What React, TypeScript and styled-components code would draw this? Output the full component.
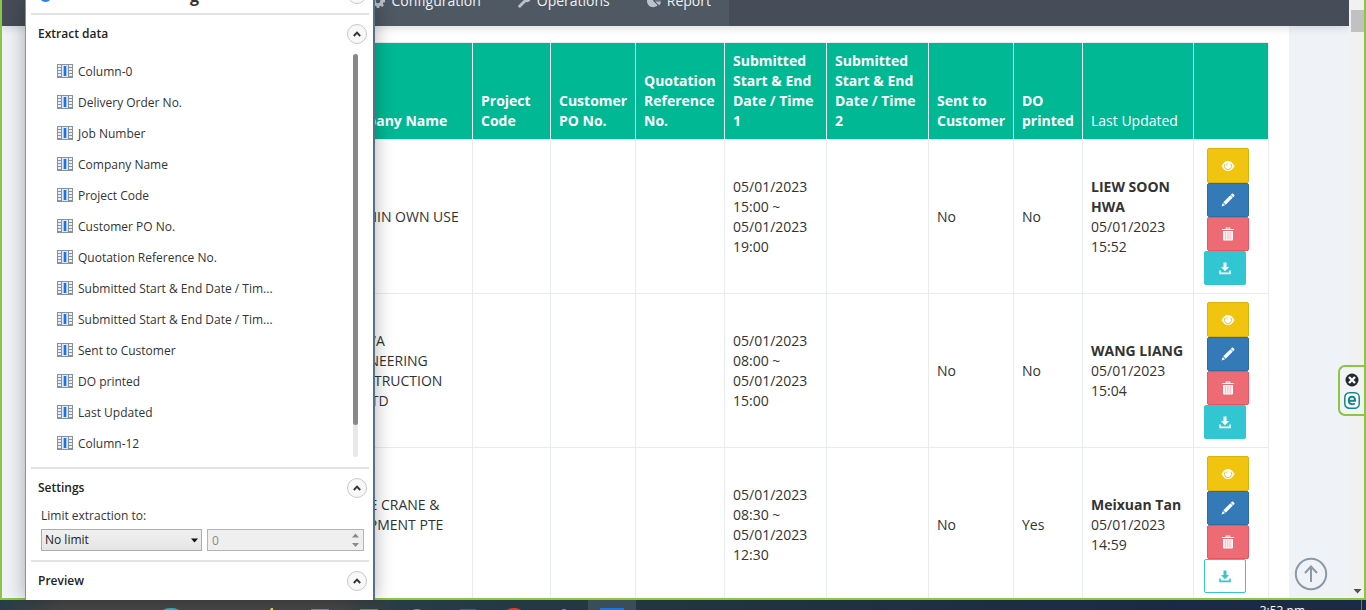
import React from 'react';
import styled, { createGlobalStyle, css } from 'styled-components';

const GlobalStyle = createGlobalStyle`
  * { box-sizing: border-box; }
  body { margin: 0; overflow: hidden; font-family: 'Open Sans', 'Noto Sans', sans-serif; font-size: 14px; line-height: 20px; color: #333; }
  button, input, select { font-family: inherit; }
`;

const Desktop = styled.div`
  position: relative;
  display: flex;
  flex-direction: column;
  height: 100vh;
  overflow: hidden;
`;

const BrowserFrame = styled.div`
  position: relative;
  flex: 1;
  min-height: 0;
  display: flex;
  border: 2px solid #8bc541;
  border-top: 0;
  background: #eff3f8;
`;

const Page = styled.div`
  flex: 1;
  min-width: 0;
  display: flex;
  flex-direction: column;
  overflow: hidden;
`;

const NavBar = styled.header`
  flex: none;
  position: relative;
  display: flex;
  align-items: flex-end;
  height: 26px;
  padding-left: 60px;
  background: #464d58;
  box-shadow: 0 1px 10px 0 rgba(50, 50, 50, 0.2);
`;

const Menu = styled.nav`
  display: flex;
  justify-content: flex-end;
  align-items: flex-end;
  gap: 1px;
  width: 667px;
  height: 26px;
  background: #4e5964;
`;

const MenuLink = styled.a`
  display: flex;
  align-items: center;
  gap: 6px;
  padding: 0 18px 15px;
  color: #f1f1f1;
  text-decoration: none;
  svg { color: #bcc2cb; }
`;

const Card = styled.main`
  flex: 1;
  min-height: 0;
  overflow: hidden;
  margin: 0 60px;
  padding: 16px 20px 0;
  background: #fff;
`;

const Grid = styled.table`
  width: 100%;
  table-layout: fixed;
  border-collapse: collapse;
  th, td { border: 1px solid #e7ecf1; padding: 8px; text-align: left; }
  th { vertical-align: bottom; background: #00b894; color: #fff; font-weight: 700; }
  td { vertical-align: middle; }
`;

const PlainHeading = styled.span`
  font-weight: 500;
`;

const Actions = styled.div`
  display: flex;
  flex-direction: column;
  align-items: flex-start;
  padding-left: 2px;
`;

const tones = {
  view: css`height: 35px; background: #f1c40f; border-color: #dab10d;`,
  edit: css`background: #337ab7; border-color: #2e6da4;`,
  remove: css`background: #ed6b75; border-color: #ea5460;`,
  save: css`margin-left: 0; background: #32c5d2; border-color: #32c5d2;`,
  outline: css`margin-left: 0; background: #fff; border-color: #32c5d2; color: #32c5d2;`,
};

const ActionButton = styled.button<{ $tone: keyof typeof tones }>`
  display: flex;
  align-items: center;
  justify-content: center;
  width: 42px;
  height: 34px;
  margin: 0 0 0 3px;
  padding: 0;
  border: 1px solid;
  border-radius: 2px;
  color: #fff;
  ${(p) => tones[p.$tone]}
`;

const PageScroll = styled.div`
  flex: none;
  display: flex;
  flex-direction: column;
  justify-content: space-between;
  align-items: flex-end;
  width: 15px;
  padding-top: 10px;
  background: #f1f1f1;
`;

const PageThumb = styled.div`
  width: 13px;
  height: 22px;
  background: #c1c1c1;
`;

const ScrollDown = styled.svg`
  margin: 0 2px 4px;
`;

const TopButton = styled.button`
  position: absolute;
  right: 36px;
  bottom: 7px;
  width: 34px;
  height: 34px;
  padding: 0;
  border: 0;
  background: none;
`;

const SideBadge = styled.aside`
  position: absolute;
  right: 0;
  top: 365px;
  display: flex;
  flex-direction: column;
  align-items: center;
  gap: 5px;
  width: 26px;
  height: 51px;
  padding-top: 6px;
  border: 2px solid #8bc541;
  border-right: 0;
  border-radius: 7px 0 0 7px;
  background: #f2f3f5;
`;

const Panel = styled.section`
  position: absolute;
  left: 25px;
  top: 0;
  bottom: 10px;
  width: 350px;
  padding: 0 4px 0 5px;
  overflow: hidden;
  border: solid;
  border-width: 0 2px 0 1px;
  border-color: #8b8f96 #557089 #8b8f96 #8b8f96;
  background: #fff;
  color: #333;
  font-size: 12px;
  line-height: 16px;
`;

const PanelShadow = styled.div`
  position: absolute;
  left: 25px;
  top: 0;
  bottom: 10px;
  width: 350px;
  box-shadow: 0 0 18px rgba(0, 0, 0, 0.3);
`;

const PanelTitle = styled.div`
  display: flex;
  align-items: flex-end;
  justify-content: space-between;
  height: 13px;
  padding: 0 2px 0 8px;
`;

const TitleText = styled.strong`
  flex: 1;
  padding: 0 0 7px 138px;
  font-size: 16px;
  line-height: 20px;
`;

const TitleMark = styled.svg`
  margin-bottom: 11px;
`;

const Group = styled.section`
  border-top: 2px solid #e3e3e3;
`;

const GroupHead = styled.div`
  display: flex;
  align-items: center;
  justify-content: space-between;
  height: 38px;
  padding: 0 2px 0 7px;
`;

const GroupTitle = styled.h2`
  margin: 0;
  color: #222;
  font-size: 12px;
  line-height: 16px;
  font-weight: 600;
`;

const Toggle = styled.button`
  display: flex;
  align-items: center;
  justify-content: center;
  width: 20px;
  height: 20px;
  padding: 0;
  border: 1px solid #c9c9c9;
  border-radius: 50%;
  background: #f8f8f8;
`;

const TitleToggle = styled(Toggle)`
  margin-bottom: 9px;
`;

const ListArea = styled.div`
  display: flex;
  justify-content: space-between;
  height: 414px;
  padding: 1px 11px 10px 26px;
`;

const FieldList = styled.ul`
  margin: 0;
  padding: 2px 0 0;
  list-style: none;
`;

const Field = styled.li`
  display: flex;
  align-items: center;
  gap: 5px;
  height: 31px;
  svg { margin-bottom: 2px; }
`;

const ListTrack = styled.div`
  width: 5px;
  border-radius: 3px;
  background: #e8e8e8;
`;

const ListThumb = styled.div`
  height: 92%;
  border-radius: 3px;
  background: #888;
`;

const LimitForm = styled.form`
  height: 53px;
  padding: 1px 0 0 10px;
`;

const LimitLabel = styled.label`
  display: block;
  padding-bottom: 5px;
`;

const LimitRow = styled.div`
  display: flex;
  gap: 5px;
`;

const SelectWrap = styled.div`
  position: relative;
  width: 161px;
  svg { position: absolute; right: 4px; top: 9px; }
`;

const LimitSelect = styled.select`
  appearance: none;
  display: block;
  width: 100%;
  height: 22px;
  padding: 0 3px;
  border: 1px solid #acacac;
  border-radius: 0;
  background: linear-gradient(#f0f0f0, #e5e5e5);
  color: #222;
  font-size: 12px;
  line-height: 16px;
`;

const NumberWrap = styled.div`
  position: relative;
  width: 157px;
  svg { position: absolute; right: 5px; top: 4px; }
`;

const NumberBox = styled.input`
  display: block;
  width: 100%;
  height: 22px;
  padding: 0 4px;
  border: 1px solid #b4b4b4;
  border-radius: 0;
  background: #efefef;
  color: #8a8a8a;
  font-size: 12px;
  line-height: 16px;
`;

const Taskbar = styled.footer`
  flex: none;
  display: flex;
  justify-content: space-between;
  height: 10px;
  overflow: hidden;
  background: linear-gradient(90deg, #273c48 0, #474747 60px, #474747 340px, #263c46 400px, #21353f 700px, #1b2a45 1200px);
`;

const Clock = styled.time`
  margin-right: 4px;
  padding: 3px 56px 0 0;
  border-right: 1px solid #6b7585;
  color: #fff;
  font-size: 12px;
  line-height: 16px;
`;

const ColumnIcon = () => (
  <svg width="16" height="14" viewBox="0 0 16 14" aria-hidden="true">
    <path d="M0 0h16v14H0z" fill="#86929c" />
    <path d="M1 1h3v2H1zM1 4h3v2H1zM1 7h3v2H1zM1 10h3v2H1zM12 1h3v2h-3zM12 4h3v2h-3zM12 7h3v2h-3zM12 10h3v2h-3z" fill="#eef0f2" />
    <path d="M5 1h6v12H5z" fill="#dce9f7" />
    <path d="M7 2h2v10H7z" fill="#1a73e8" />
    <path d="M6.500 2h3v10h-3z" fill="#1a73e8" fillOpacity=".6" />
  </svg>
);

const ChevronUp = () => (
  <svg width="8" height="6" viewBox="0 0 8 6" aria-hidden="true">
    <path d="M.8 5L4 1.700 7.200 5" fill="none" stroke="#333" strokeWidth="1.900" />
  </svg>
);

const Cog = () => (
  <svg width="14" height="14" viewBox="0 0 14 14" fill="currentColor" aria-hidden="true">
    <path fillRule="evenodd" d="M5.800 0h2.400l.4 1.900 1 .4 1.600-1.100 1.700 1.700-1.100 1.600.4 1 1.800.4v2.300l-1.800.4-.4 1 1.100 1.600-1.700 1.700-1.600-1.100-1 .4-.4 1.800H5.800l-.4-1.800-1-.4-1.600 1.100-1.700-1.700 1.100-1.600-.4-1L0 8.200V5.900l1.800-.4.4-1-1.100-1.600 1.700-1.700 1.600 1.100 1-.4zM7 4.700a2.300 2.300 0 1 0 0 4.600 2.300 2.300 0 0 0 0-4.600z" />
  </svg>
);

const Wrench = () => (
  <svg width="13" height="14" viewBox="0 0 13 14" fill="currentColor" aria-hidden="true">
    <path d="M.6 11.300l5.300-5.200A3.900 3.900 0 0 1 11 1.200L8.700 2.600v1.900l1.500.9 2.500-1.500a3.900 3.900 0 0 1-4.800 4.200l-5.200 5.200a1.400 1.400 0 0 1-2.100-2z" />
  </svg>
);

const Pie = () => (
  <svg width="14" height="14" viewBox="0 0 14 14" fill="currentColor" aria-hidden="true">
    <path d="M6.200 1v6l4.400 4.200A6.100 6.100 0 1 1 6.200 1zM7.600 0a6.200 6.200 0 0 1 6.200 6.200H7.600zM8.200 7.400H14a6 6 0 0 1-1.900 3.900z" />
  </svg>
);

const Eye = () => (
  <svg width="14" height="12" viewBox="0 0 14 12" aria-hidden="true">
    <path d="M.5 6C2 3 4.200 1 7 1S12 3 13.500 6C12 9 9.800 11 7 11S2 9 .5 6z" fill="#fff" />
    <path d="M4.200 3.800a3.600 3.600 0 1 0 5.600 0" fill="none" stroke="#e5b90e" strokeWidth=".9" />
    <path d="M5.400 4.800a1.800 1.800 0 0 1 1.400-1.200" fill="none" stroke="#e5b90e" strokeWidth=".8" />
  </svg>
);

const Pencil = () => (
  <svg width="14" height="14" viewBox="0 0 14 14" fill="#fff" aria-hidden="true">
    <path d="M10.800.8a1 1 0 0 1 1.400 0l1 1a1 1 0 0 1 0 1.400l-1 1-2.400-2.400zM9.400 2.200l2.400 2.400-7.100 7.100-2.400-2.400zM1.800 9.900l2.300 2.300L.5 13.500z" />
  </svg>
);

const Trash = () => (
  <svg width="12" height="14" viewBox="0 0 12 14" aria-hidden="true">
    <path d="M0 3V2h3.700V.5h4.600V2H12v1zM4.600 2h2.800v-.6H4.600z" fill="#fff" fillRule="evenodd" />
    <path d="M1 4h10v8.500a1 1 0 0 1-1 1H2a1 1 0 0 1-1-1z" fill="#fff" />
    <path d="M3.400 5v7.500M5.200 5v7.500M7 5v7.500M8.800 5v7.500" stroke="#f3a9b2" strokeWidth=".8" />
  </svg>
);

const Download = () => (
  <svg width="12" height="13" viewBox="0 0 12 13" fill="currentColor" aria-hidden="true">
    <path d="M4.500.5h3V5h2.600L6 9.200 1.900 5h2.600zM.2 8.500h1.600v2h8.400v-2h1.600v3.700H.2z" />
  </svg>
);

type Row = {
  company: string[];
  period: string[];
  sent: string;
  printed: string;
  user: string;
  time: string;
  outline?: boolean;
};

const widths = [40, 102, 103, 145, 78, 85, 89, 102, 102, 85, 69, 111, 75];

const headings = [
  '', '', '', 'Company Name', 'Project Code', 'Customer PO No.', 'Quotation Reference No.',
  'Submitted Start & End Date / Time 1', 'Submitted Start & End Date / Time 2',
  'Sent to Customer', 'DO printed',
];

const rows: Row[] = [
  { company: ['SAN HIN OWN USE'], period: ['05/01/2023', '15:00 ~', '05/01/2023', '19:00'], sent: 'No', printed: 'No', user: 'LIEW SOON HWA', time: '15:52' },
  { company: ['SANWA', 'ENGINEERING', 'CONSTRUCTION', 'PTE LTD'], period: ['05/01/2023', '08:00 ~', '05/01/2023', '15:00'], sent: 'No', printed: 'No', user: 'WANG LIANG', time: '15:04' },
  { company: ['PRIME CRANE &', 'EQUIPMENT PTE', 'LTD'], period: ['05/01/2023', '08:30 ~', '05/01/2023', '12:30'], sent: 'No', printed: 'Yes', user: 'Meixuan Tan', time: '14:59', outline: true },
];

const fields = [
  'Column-0', 'Delivery Order No.', 'Job Number', 'Company Name', 'Project Code', 'Customer PO No.',
  'Quotation Reference No.', 'Submitted Start & End Date / Tim...', 'Submitted Start & End Date / Tim...',
  'Sent to Customer', 'DO printed', 'Last Updated', 'Column-12',
];

const Lines = ({ items }: { items: string[] }) => (
  <>{items.map((line, i) => <React.Fragment key={i}>{i > 0 && <br />}{line}</React.Fragment>)}</>
);

const OrderRow = ({ row }: { row: Row }) => (
  <tr>
    <td /><td /><td />
    <td><Lines items={row.company} /></td>
    <td /><td /><td />
    <td><Lines items={row.period} /></td>
    <td />
    <td>{row.sent}</td>
    <td>{row.printed}</td>
    <td><strong>{row.user}</strong><br />05/01/2023 {row.time}</td>
    <td>
      <Actions>
        <ActionButton $tone="view" aria-label="View"><Eye /></ActionButton>
        <ActionButton $tone="edit" aria-label="Edit"><Pencil /></ActionButton>
        <ActionButton $tone="remove" aria-label="Delete"><Trash /></ActionButton>
        <ActionButton $tone={row.outline ? 'outline' : 'save'} aria-label="Download"><Download /></ActionButton>
      </Actions>
    </td>
  </tr>
);

const SectionHead = ({ title }: { title: string }) => (
  <GroupHead>
    <GroupTitle>{title}</GroupTitle>
    <Toggle aria-label={`Collapse ${title}`}><ChevronUp /></Toggle>
  </GroupHead>
);

export default function App() {
  return (
    <Desktop>
      <GlobalStyle />
      <BrowserFrame>
        <Page>
          <NavBar>
            <Menu>
              <MenuLink href="#configuration"><Cog />Configuration</MenuLink>
              <MenuLink href="#operations"><Wrench />Operations</MenuLink>
              <MenuLink href="#report"><Pie />Report</MenuLink>
            </Menu>
          </NavBar>
          <Card>
            <Grid>
              <colgroup>{widths.map((w, i) => <col key={i} width={w} />)}</colgroup>
              <thead>
                <tr>
                  {headings.map((h, i) => <th key={i}>{h}</th>)}
                  <th><PlainHeading>Last Updated</PlainHeading></th>
                  <th />
                </tr>
              </thead>
              <tbody>{rows.map((row) => <OrderRow key={row.user} row={row} />)}</tbody>
            </Grid>
          </Card>
        </Page>
        <PageScroll>
          <PageThumb />
          <ScrollDown width="9" height="5" viewBox="0 0 9 5" aria-hidden="true"><path d="M.5 0h8l-4 4.500z" fill="#505050" /></ScrollDown>
        </PageScroll>
        <TopButton aria-label="Back to top">
          <svg width="34" height="34" viewBox="0 0 34 34" fill="none" stroke="#8c98a8" strokeWidth="2" aria-hidden="true">
            <circle cx="17" cy="17" r="15.200" />
            <path d="M17 25V10M11 16l6-6.500 6 6.500" />
          </svg>
        </TopButton>
        <SideBadge>
          <svg width="14" height="14" viewBox="0 0 14 14" aria-hidden="true">
            <circle cx="7" cy="7" r="6.500" fill="#23272f" />
            <path d="M4 4l6 6M10 4l-6 6" stroke="#fff" strokeWidth="2.400" />
          </svg>
          <svg width="16" height="17" viewBox="0 0 16 17" fill="none" stroke="#12868c" aria-hidden="true">
            <rect x=".8" y=".8" width="14.400" height="15.400" rx="4.500" fill="#fff" strokeWidth="1.500" />
            <path d="M4.800 8.700h6.300c0-2.500-1.200-3.900-3.100-3.900S4.800 6.300 4.800 8.600s1.300 3.700 3.400 3.700c1.100 0 2-.3 2.700-.9" strokeWidth="1.900" />
          </svg>
        </SideBadge>
      </BrowserFrame>
      <Taskbar>
        <svg width="660" height="10" viewBox="0 0 660 10" aria-hidden="true">
          <path d="M588 0h48v10h-48z" fill="#3b4d58" />
          <ellipse cx="171" cy="13" rx="10" ry="5" fill="#27b7cf" />
          <path d="M270 10l1-2h2v2z" fill="#f4dc3c" />
          <path d="M311 9h18v1h-18z" fill="#3d9be0" />
          <path d="M360 9h18v1h-18z" fill="#2aa872" />
          <ellipse cx="417" cy="12" rx="6" ry="3" fill="#d8735a" />
          <path d="M460 9h16v1h-16z" fill="#1c6ca6" />
          <ellipse cx="514" cy="13" rx="9" ry="5" fill="#e63b2e" />
          <path d="M562 9h4v1h-4z" fill="#7d74c9" />
          <path d="M600 8h24v2h-24z" fill="#1277e8" />
        </svg>
        <Clock>3:53 pm</Clock>
      </Taskbar>
      <PanelShadow />
      <Panel>
        <PanelTitle>
          <TitleMark width="13" height="13" viewBox="0 0 13 13" aria-hidden="true"><circle cx="6.500" cy="6.500" r="6.500" fill="#2b7de9" /></TitleMark>
          <TitleText>g</TitleText>
          <TitleToggle aria-label="Collapse panel" />
        </PanelTitle>
        <Group>
          <SectionHead title="Extract data" />
          <ListArea>
            <FieldList>
              {fields.map((name, i) => <Field key={i}><ColumnIcon />{name}</Field>)}
            </FieldList>
            <ListTrack><ListThumb /></ListTrack>
          </ListArea>
        </Group>
        <Group>
          <SectionHead title="Settings" />
          <LimitForm>
            <LimitLabel htmlFor="limit">Limit extraction to:</LimitLabel>
            <LimitRow>
              <SelectWrap>
                <LimitSelect id="limit"><option>No limit</option></LimitSelect>
                <svg width="7" height="5" viewBox="0 0 7 5" aria-hidden="true"><path d="M0 .5h7l-3.500 4z" fill="#111" /></svg>
              </SelectWrap>
              <NumberWrap>
                <NumberBox aria-label="Limit" defaultValue="0" disabled />
                <svg width="7" height="15" viewBox="0 0 7 15" fill="#8a8a8a" aria-hidden="true"><path d="M0 4.500h7L3.500.5zM0 10h7l-3.500 4z" /></svg>
              </NumberWrap>
            </LimitRow>
          </LimitForm>
        </Group>
        <Group>
          <SectionHead title="Preview" />
        </Group>
      </Panel>
    </Desktop>
  );
}
